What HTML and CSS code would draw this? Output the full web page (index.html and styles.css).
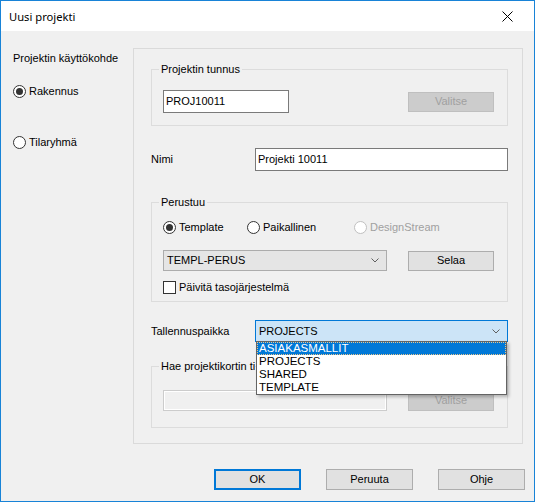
FILE: index.html
```html
<!DOCTYPE html>
<html lang="fi">
<head>
    <meta charset="UTF-8">
    <title>Uusi projekti</title>
    <link rel="stylesheet" href="styles.css">
</head>
<body>
    <div class="window">
        <div class="titlebar">
            <span class="title">Uusi projekti</span>
            <svg class="close" width="11" height="11" viewBox="0 0 11 11">
                <path d="M0.5 0.5 L10.5 10.5 M10.5 0.5 L0.5 10.5" stroke="#000" stroke-width="1" fill="none"/>
            </svg>
        </div>

        <div class="content">
            <div class="main">
                <!-- Left side: usage -->
                <div class="side">
                    <div class="side-label">Projektin käyttökohde</div>
                    <div class="radio side-first"><span class="dot checked"></span>Rakennus</div>
                    <div class="radio side-second"><span class="dot"></span>Tilaryhmä</div>
                </div>

                <!-- Right panel -->
                <div class="panel">
                    <div class="group g-tunnus">
                        <span class="group-title">Projektin tunnus</span>
                        <div class="row between">
                            <div class="input tunnus-input">PROJ10011</div>
                            <div class="btn disabled">Valitse</div>
                        </div>
                    </div>

                    <div class="field nimi">
                        <span class="field-label">Nimi</span>
                        <div class="input grow">Projekti 10011</div>
                    </div>

                    <div class="group g-perustuu">
                        <span class="group-title">Perustuu</span>
                        <div class="row">
                            <div class="radio r-template"><span class="dot checked"></span>Template</div>
                            <div class="radio r-paikallinen"><span class="dot"></span>Paikallinen</div>
                            <div class="radio off"><span class="dot"></span>DesignStream</div>
                        </div>
                        <div class="row between combo-row">
                            <div class="combo templ">
                                <span>TEMPL-PERUS</span>
                                <svg class="chevron" width="8" height="5" viewBox="0 0 8 5"><path d="M0.5 0.5 L4 4 L7.5 0.5" stroke="#606060" fill="none"/></svg>
                            </div>
                            <div class="btn">Selaa</div>
                        </div>
                        <div class="check-row">
                            <span class="box"></span>Päivitä tasojärjestelmä
                        </div>
                    </div>

                    <div class="field tallennus">
                        <span class="field-label">Tallennuspaikka</span>
                        <div class="combo active grow">
                            <span>PROJECTS</span>
                            <svg class="chevron" width="8" height="5" viewBox="0 0 8 5"><path d="M0.5 0.5 L4 4 L7.5 0.5" stroke="#606060" fill="none"/></svg>
                            <ul class="dropdown">
                                <li class="selected">ASIAKASMALLIT</li>
                                <li>PROJECTS</li>
                                <li>SHARED</li>
                                <li>TEMPLATE</li>
                            </ul>
                        </div>
                    </div>

                    <div class="group g-hae">
                        <!-- title is cut where the open list covers it -->
                        <span class="group-title hae-title">Hae projektikortin tiedot</span>
                        <div class="row between">
                            <div class="input off hae-input"></div>
                            <div class="btn disabled">Valitse</div>
                        </div>
                    </div>
                </div>
            </div>

            <div class="buttons">
                <div class="btn big default">OK</div>
                <div class="btn big">Peruuta</div>
                <div class="btn big">Ohje</div>
            </div>
        </div>
    </div>
</body>
</html>
```

FILE: styles.css
```css
html, body {
    margin: 0;
    padding: 0;
    background: #f0f0f0;
}

.window {
    width: 535px;
    height: 502px;
    box-sizing: border-box;
    border: 1px solid #1883d7;
    font-family: "Liberation Sans", Arial, sans-serif;
    font-size: 11px;
    line-height: 13px;
    color: #000;
    overflow: hidden;
}

.titlebar {
    height: 30px;
    background: #fff;
    display: flex;
    align-items: center;
    justify-content: space-between;
    padding: 0 21px 0 8px;
}

.title {
    font-family: "Noto Sans", "Open Sans", sans-serif;
    font-size: 11.2px;
    line-height: 16px;
    margin-top: 1px;
}

.content {
    background: #f0f0f0;
    height: 470px;
}

.main {
    display: flex;
}

.side {
    width: 132px;
    padding: 21px 0 0 12px;
    box-sizing: border-box;
}

.side-first {
    margin-top: 20px;
}

.side-second {
    margin-top: 38px;
}

/* radio buttons and checkbox */
.radio, .check-row {
    display: flex;
    align-items: center;
    height: 13px;
    white-space: nowrap;
}

.dot {
    width: 11px;
    height: 11px;
    border: 1px solid #333;
    border-radius: 50%;
    background: #fff;
    margin-right: 3px;
    display: flex;
    align-items: center;
    justify-content: center;
    flex-shrink: 0;
}

.dot.checked::after {
    content: "";
    width: 7px;
    height: 7px;
    border-radius: 50%;
    background: #333;
}

.radio.off {
    color: #a0a0a0;
}

.radio.off .dot {
    border-color: #c0c0c0;
}

.box {
    width: 11px;
    height: 11px;
    border: 1px solid #333;
    background: #fff;
    margin-right: 3px;
}

/* right panel */
.panel {
    margin-top: 17px;
    width: 390px;
    height: 396px;
    box-sizing: border-box;
    border: 1px solid #dadada;
    padding: 0 14px 0 17px;
}

.group {
    position: relative;
    border: 1px solid #dcdcdc;
    padding: 0 13px 0 11px;
}

.group-title {
    position: absolute;
    top: -7px;
    left: 7px;
    padding: 0 2px;
    background: #f0f0f0;
    white-space: nowrap;
}

.hae-title {
    width: 92px;
    overflow: hidden;
}

.g-tunnus {
    margin-top: 20px;
    padding-top: 20px;
    padding-bottom: 12px;
}

.g-perustuu {
    margin-top: 31px;
    padding-top: 18px;
    padding-bottom: 7px;
}

.g-hae {
    margin-top: 24px;
    padding-top: 23px;
    padding-bottom: 16px;
}

.row {
    display: flex;
    align-items: center;
}

.between {
    justify-content: space-between;
}

.r-template {
    width: 84px;
}

.r-paikallinen {
    width: 107px;
}

.combo-row {
    margin-top: 16px;
}

.check-row {
    margin-top: 10px;
}

.field {
    display: flex;
    align-items: center;
}

.field-label {
    width: 104px;
    flex-shrink: 0;
}

.nimi {
    margin-top: 22px;
}

.tallennus {
    margin-top: 18px;
}

.grow {
    flex: 1;
}

/* inputs */
.input {
    height: 23px;
    box-sizing: border-box;
    border: 1px solid #7a7a7a;
    background: #fff;
    padding: 2px 2px;
    line-height: 17px;
}

.tunnus-input {
    width: 126px;
}

.input.off {
    border-color: #cccccc;
    background: #f0f0f0;
    box-shadow: inset 0 0 0 1px #fff;
}

.hae-input {
    width: 224px;
    height: 21px;
}

.combo {
    position: relative;
    height: 21px;
    box-sizing: border-box;
    border: 1px solid #acacac;
    background: #e5e5e5;
    display: flex;
    align-items: center;
    justify-content: space-between;
    padding: 0 7px 0 3px;
}

.combo.templ {
    width: 224px;
}

.combo.active {
    height: 22px;
    border-color: #0078d7;
    background: #cce4f7;
    padding-left: 3px;
}

.dropdown {
    position: absolute;
    top: 100%;
    left: 0;
    right: 0;
    margin: 0;
    padding: 0;
    list-style: none;
    background: #fff;
    border: 1px solid #646464;
    box-shadow: 2px 2px 3px rgba(0, 0, 0, 0.25);
    z-index: 2;
}

.dropdown li {
    height: 13px;
    line-height: 13px;
    padding-left: 2px;
    font-size: 11.5px;
}

.dropdown li.selected {
    background: #0078d7;
    color: #fff;
    outline: 1px dotted #e9c58a;
    outline-offset: -1px;
}

/* buttons */
.btn {
    width: 86px;
    height: 20px;
    box-sizing: border-box;
    border: 1px solid #adadad;
    background: #e1e1e1;
    display: flex;
    align-items: center;
    justify-content: center;
}

.btn.disabled {
    background: #cccccc;
    border-color: #bfbfbf;
    color: #a0a0a0;
}

.btn.big {
    width: 87px;
    height: 21px;
}

.btn.default {
    border: 2px solid #0078d7;
}

.buttons {
    display: flex;
    justify-content: flex-end;
    gap: 25px;
    margin-top: 25px;
    padding-right: 9px;
}
```
